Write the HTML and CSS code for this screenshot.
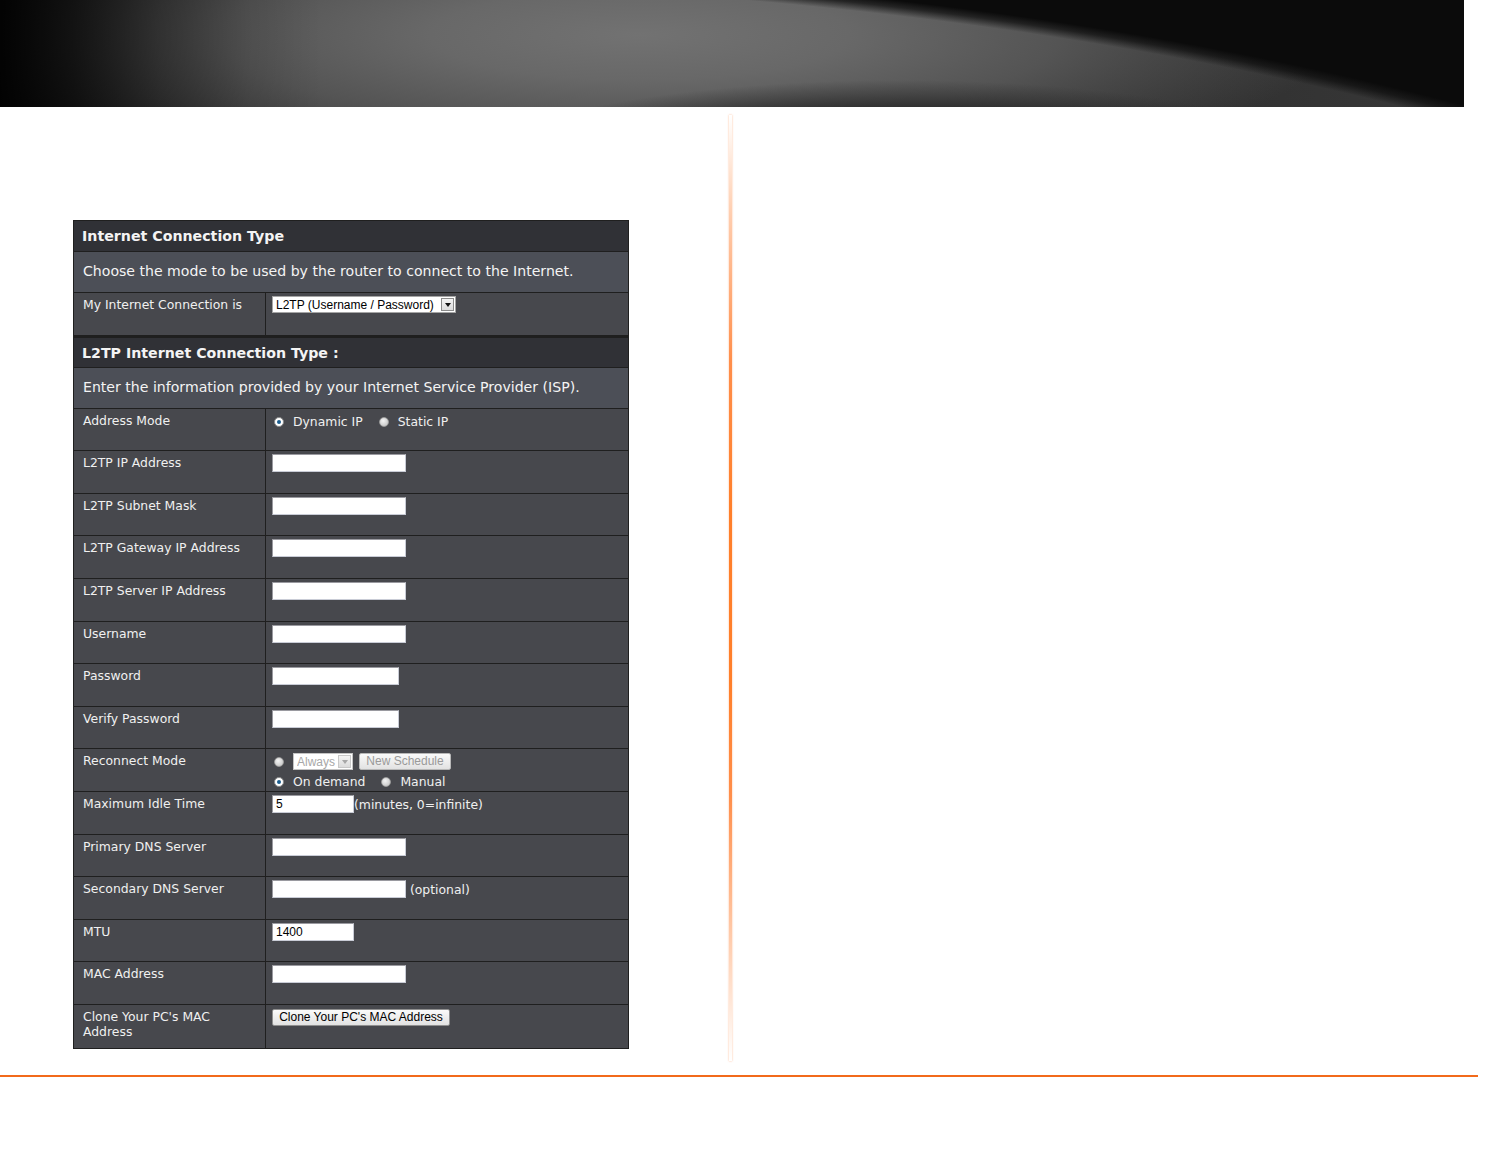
FILE: index.html
```html
<!DOCTYPE html>
<html>
<head>
<meta charset="utf-8">
<link rel="stylesheet" href="styles.css">
</head>
<body>
<div class="banner"></div>
<div class="main">
  <div class="left">
    <div class="panel">
      <div class="title">Internet Connection Type</div>
      <div class="desc">Choose the mode to be used by the router to connect to the Internet.</div>
      <div class="row">
        <div class="label">My Internet Connection is</div>
        <div class="value">
          <span class="select wide"><span class="sel-text">L2TP (Username / Password)</span><span class="arrow"></span></span>
        </div>
      </div>
      <div class="title sec">L2TP Internet Connection Type :</div>
      <div class="desc">Enter the information provided by your Internet Service Provider (ISP).</div>
      <div class="row">
        <div class="label">Address Mode</div>
        <div class="value radios"><span class="radio on"></span><span class="rtext">Dynamic IP</span><span class="radio"></span><span class="rtext">Static IP</span></div>
      </div>
      <div class="row"><div class="label">L2TP IP Address</div><div class="value"><input class="field" type="text"></div></div>
      <div class="row"><div class="label">L2TP Subnet Mask</div><div class="value"><input class="field" type="text"></div></div>
      <div class="row"><div class="label">L2TP Gateway IP Address</div><div class="value"><input class="field" type="text"></div></div>
      <div class="row"><div class="label">L2TP Server IP Address</div><div class="value"><input class="field" type="text"></div></div>
      <div class="row"><div class="label">Username</div><div class="value"><input class="field" type="text"></div></div>
      <div class="row"><div class="label">Password</div><div class="value"><input class="field pw" type="text"></div></div>
      <div class="row"><div class="label">Verify Password</div><div class="value"><input class="field pw" type="text"></div></div>
      <div class="row">
        <div class="label">Reconnect Mode</div>
        <div class="value stack">
          <div class="line"><span class="radio"></span><span class="select dis"><span class="sel-text">Always</span><span class="arrow"></span></span><span class="btn dis">New Schedule</span></div>
          <div class="line radios"><span class="radio on"></span><span class="rtext">On demand</span><span class="radio"></span><span class="rtext">Manual</span></div>
        </div>
      </div>
      <div class="row"><div class="label">Maximum Idle Time</div><div class="value"><input class="field short" type="text" value="5"><span class="note">(minutes, 0=infinite)</span></div></div>
      <div class="row"><div class="label">Primary DNS Server</div><div class="value"><input class="field" type="text"></div></div>
      <div class="row"><div class="label">Secondary DNS Server</div><div class="value"><input class="field" type="text"><span class="note">&nbsp;(optional)</span></div></div>
      <div class="row"><div class="label">MTU</div><div class="value"><input class="field short" type="text" value="1400"></div></div>
      <div class="row"><div class="label">MAC Address</div><div class="value"><input class="field" type="text"></div></div>
      <div class="row last"><div class="label">Clone Your PC's MAC Address</div><div class="value"><span class="btn clone">Clone Your PC's MAC Address</span></div></div>
    </div>
  </div>
  <div class="divider"><div class="glow"></div></div>
</div>
<div class="rule"></div>
</body>
</html>
```
FILE: styles.css
```css
html, body {
  margin: 0;
  padding: 0;
  background: #ffffff;
}
body {
  width: 1509px;
  height: 1167px;
  font-family: "DejaVu Sans", Verdana, sans-serif;
}
.banner {
  width: 1464px;
  height: 107px;
  background:
    linear-gradient(90deg, rgba(0,0,0,0.95) 0%, rgba(0,0,0,0.7) 5%, rgba(0,0,0,0.35) 11%, rgba(0,0,0,0.1) 17%, rgba(0,0,0,0) 22%),
    radial-gradient(ellipse 1978px 729px at 300px 700px, rgba(11,11,11,0) 98.6%, rgba(11,11,11,0.7) 99.7%, #0b0b0b 100.6%),
    radial-gradient(ellipse 480px 115px at 900px 195px, rgba(38,38,38,1) 0%, rgba(40,40,40,0.95) 72%, rgba(42,42,42,0.4) 88%, rgba(42,42,42,0) 100%),
    radial-gradient(ellipse 700px 150px at 640px 35px, #727272 0%, #686868 30%, #545454 60%, rgba(58,58,58,0) 100%),
    linear-gradient(90deg, #2a2a2a 0%, #333333 40%, #2c2c2c 70%, #383838 100%);
}
.main {
  display: flex;
  height: 968px;
}
.left {
  width: 727px;
  box-sizing: border-box;
  padding: 113px 0 0 73px;
}
.divider {
  width: 7px;
  margin: 8px 0 14px 0;
  display: flex;
  justify-content: center;
}
.glow {
  width: 3px;
  background: linear-gradient(180deg, rgba(255,140,60,0) 0%, rgba(255,150,85,0.45) 10%, rgba(255,130,55,0.9) 26%, #ff7f2a 42%, #ff7f2a 60%, rgba(255,130,55,0.9) 72%, rgba(255,150,85,0.45) 88%, rgba(255,140,60,0) 100%);
  box-shadow: 0 0 2px rgba(255,120,40,0.55);
}
.rule {
  width: 1478px;
  height: 2px;
  background: #f26a1b;
}
.panel {
  width: 556px;
  box-sizing: border-box;
  border: 1px solid #1f1f1f;
  background: #47484d;
  color: #f0f0f0;
}
.title {
  height: 31px;
  box-sizing: border-box;
  padding: 7px 0 0 8px;
  background: #303136;
  font-weight: bold;
  font-size: 14.2px;
  color: #f4f4f4;
  border-bottom: 1px solid #1f1f1f;
}
.title.sec {
  border-top: 2px solid #1f1f1f;
  height: 32px;
}
.desc {
  height: 41px;
  box-sizing: border-box;
  padding: 11px 0 0 9px;
  background: #4c4f57;
  font-size: 14.1px;
  color: #f4f4f4;
  border-bottom: 1px solid #1f1f1f;
}
.row {
  display: grid;
  grid-template-columns: 192px 1fr;
  height: 42.6px;
  box-sizing: border-box;
  border-bottom: 1px solid #1f1f1f;
  font-size: 12.4px;
}
.row.last {
  border-bottom: none;
}
.label {
  padding: 4px 18px 0 9px;
  border-right: 1px solid #1f1f1f;
  line-height: 15px;
}
.value {
  padding: 3px 0 0 6px;
  display: flex;
  align-items: flex-start;
}
.field {
  width: 134px;
  height: 18px;
  box-sizing: border-box;
  margin: 0;
  border: 1px solid #c9ccd6;
  border-top-color: #9a9aa0;
  border-left-color: #9a9aa0;
  background: #ffffff;
  padding: 0 3px;
  font-family: "Liberation Sans", Arial, sans-serif;
  font-size: 12px;
  color: #000;
  outline: none;
}
.field.pw { width: 127px; }
.field.short { width: 82px; }
.note {
  padding-top: 2px;
  font-size: 12.4px;
  color: #f0f0f0;
}
.select {
  display: inline-flex;
  align-items: center;
  height: 17px;
  box-sizing: border-box;
  background: #fff;
  border: 1px solid #a5a5a5;
  font-family: "Liberation Sans", Arial, sans-serif;
  font-size: 12px;
  color: #000;
  padding: 0 1px 0 3px;
}
.select.wide { width: 184px; }
.sel-text { flex: 1; white-space: nowrap; overflow: hidden; }
.arrow {
  width: 13px;
  height: 13px;
  box-sizing: border-box;
  border: 1px solid #8a8a8a;
  background: linear-gradient(#f4f4f4, #dcdcdc);
  position: relative;
}
.arrow::after {
  content: "";
  position: absolute;
  left: 3px;
  top: 4px;
  border-left: 3px solid transparent;
  border-right: 3px solid transparent;
  border-top: 4px solid #111;
}
.select.dis {
  width: 60px;
  color: #a8a8a8;
  border-color: #c4c4c4;
  margin-left: 9px;
}
.select.dis .sel-text { flex: none; width: 41px; }
.select.dis .arrow { border-color: #c8c8c8; }
.select.dis .arrow::after { border-top-color: #a8a8a8; }
.btn {
  display: inline-block;
  height: 17px;
  box-sizing: border-box;
  border: 1px solid #8f8f8f;
  border-radius: 2px;
  background: linear-gradient(#fafafa, #e2e2e2);
  font-family: "Liberation Sans", Arial, sans-serif;
  font-size: 12px;
  line-height: 15px;
  text-align: center;
  color: #000;
}
.btn.dis {
  width: 92px;
  margin-left: 6px;
  color: #9a9a9a;
  border-color: #b8b8b8;
}
.btn.clone {
  width: 178px;
  margin-top: 1px;
}
.radios {
  align-items: center;
}
.radio {
  width: 8px;
  height: 8px;
  border-radius: 50%;
  background: radial-gradient(circle at 40% 35%, #f4f4f4, #bdbdbd);
  border: 1px solid #9c9c9c;
  box-sizing: content-box;
  margin: 0 0 0 2px;
  flex: none;
  position: relative;
}
.radio.on {
  background: #ffffff;
  border-color: #8a8a8a;
}
.radio.on::after {
  content: "";
  position: absolute;
  left: 2px;
  top: 2px;
  width: 4px;
  height: 4px;
  border-radius: 50%;
  background: #1b5d8e;
}
.rtext {
  margin: 0 14px 0 9px;
}
.value.radios {
  padding-top: 5px;
  align-items: flex-start;
}
.value.radios .radio { margin-top: 3px; }
.stack {
  flex-direction: column;
  padding-top: 4px;
}
.stack .line {
  display: flex;
  align-items: center;
  height: 17px;
}
.stack .line.radios { margin-top: 3px; }
```
